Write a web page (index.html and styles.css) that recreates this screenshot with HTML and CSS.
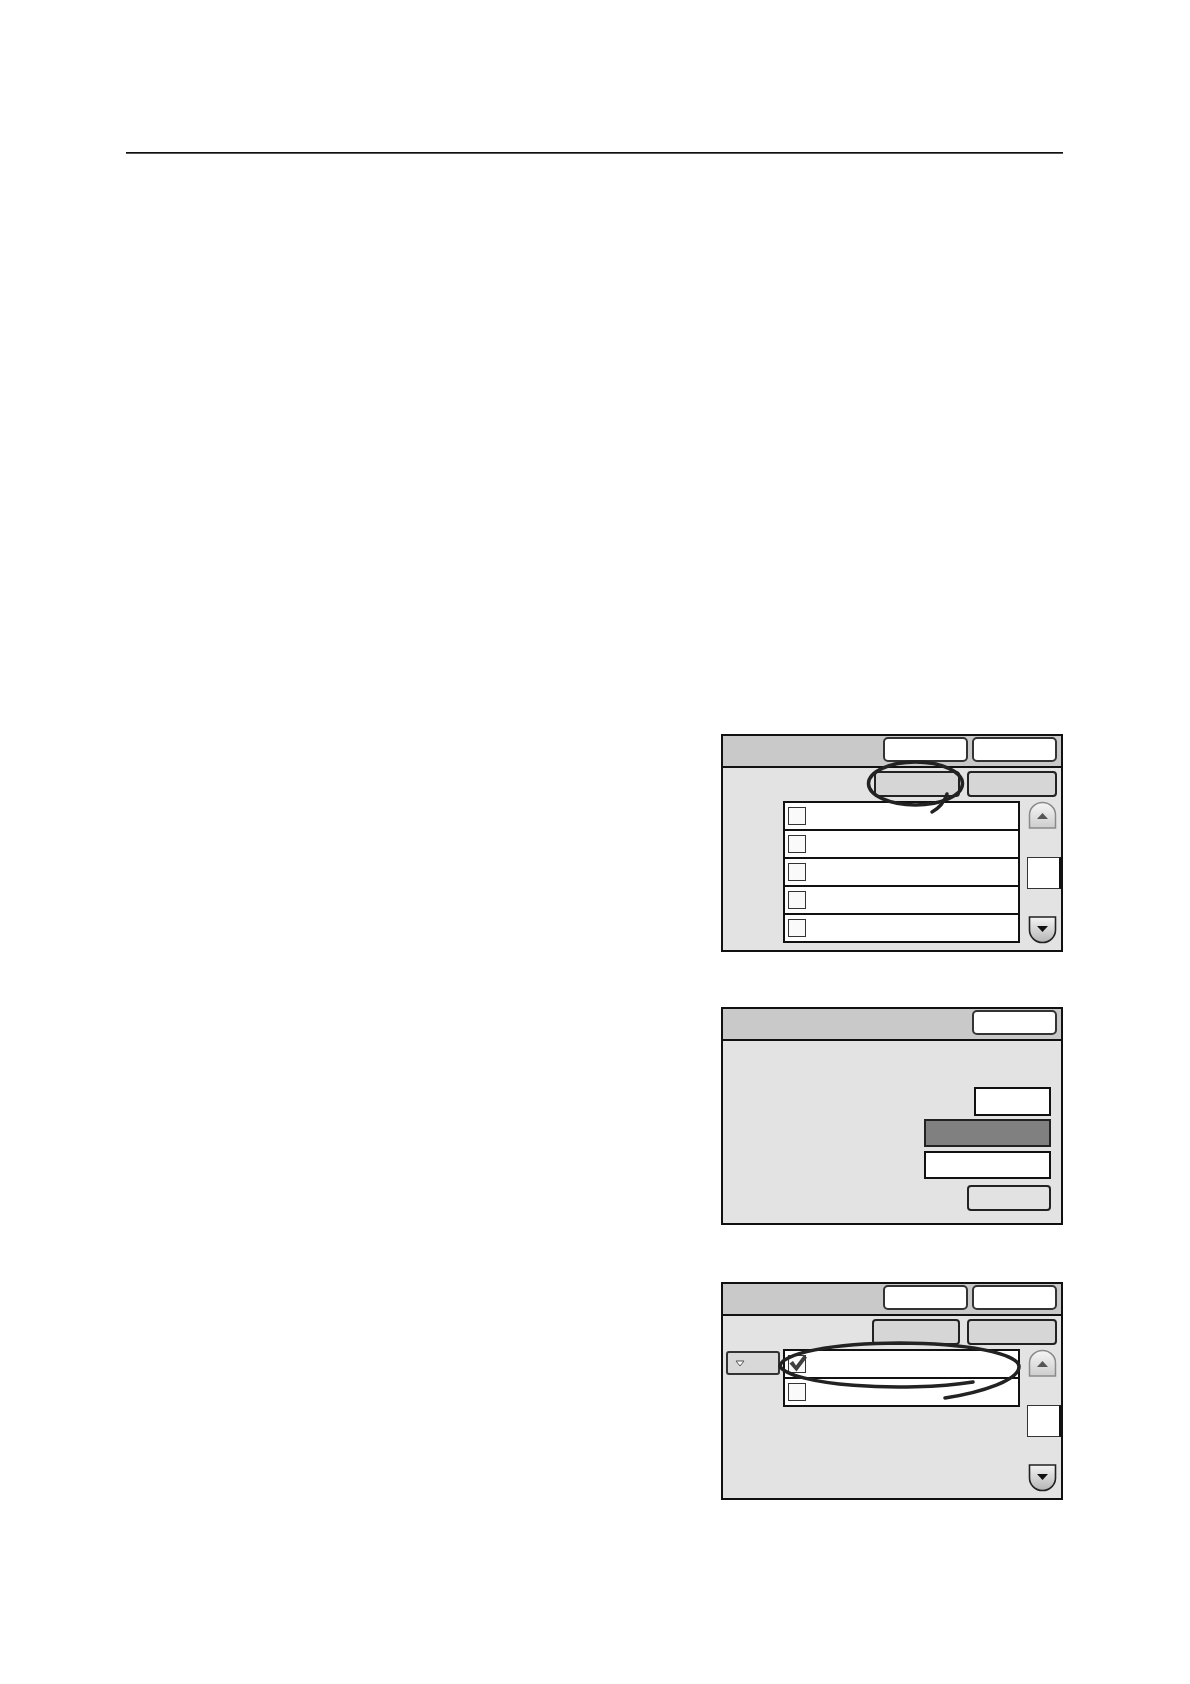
FILE: index.html
```html
<!DOCTYPE html>
<html lang="en">
<head>
<meta charset="utf-8">
<title>Panels</title>
<link rel="stylesheet" href="styles.css">
</head>
<body>
<div class="page">
  <div class="rule"></div>
  <div class="panels">

    <div class="panel">
      <div class="head"><span class="hbtn"></span><span class="hbtn"></span></div>
      <div class="body">
        <div class="tabs"><span class="tab tab-a"></span><span class="tab tab-b"></span></div>
        <div class="main">
          <div class="side"></div>
          <div class="list">
            <div class="row"><span class="cb"></span></div>
            <div class="row"><span class="cb"></span></div>
            <div class="row"><span class="cb"></span></div>
            <div class="row"><span class="cb"></span></div>
            <div class="row"><span class="cb"></span></div>
          </div>
          <div class="scroll">
            <svg class="arrow" width="29" height="28" viewBox="0 0 29 28">
              <defs><linearGradient id="gu1" x1="0" y1="0" x2="0" y2="1"><stop offset="0" stop-color="#f6f6f6"/><stop offset="1" stop-color="#cdcdcd"/></linearGradient></defs>
              <path d="M1.5 27 L1.5 14 A13 12.5 0 0 1 27.5 14 L27.5 27 Z" fill="url(#gu1)" stroke="#8a8a8a" stroke-width="1.5"/>
              <polygon points="9,18 20,18 14.5,12" fill="#555"/>
            </svg>
            <div class="thumb"></div>
            <svg class="arrow" width="29" height="28" viewBox="0 0 29 28">
              <defs><linearGradient id="gd1" x1="0" y1="0" x2="0" y2="1"><stop offset="0" stop-color="#f4f4f4"/><stop offset="1" stop-color="#b4b4b4"/></linearGradient></defs>
              <path d="M1.5 1 L27.5 1 L27.5 14 A13 12.5 0 0 1 1.5 14 Z" fill="url(#gd1)" stroke="#222" stroke-width="1.6"/>
              <polygon points="9,10 20,10 14.5,16" fill="#111"/>
            </svg>
          </div>
        </div>
      </div>
      <svg class="mark" width="342" height="218" viewBox="0 0 342 218">
        <ellipse cx="194.5" cy="49.5" rx="47" ry="21.5" fill="none" stroke="#222" stroke-width="3.5"/>
        <path d="M226 60 Q222 72 211 78" fill="none" stroke="#222" stroke-width="3.5" stroke-linecap="round"/>
      </svg>
    </div>

    <div class="panel">
      <div class="head"><span class="hbtn"></span></div>
      <div class="body body-form">
        <div class="box box-small"></div>
        <div class="box box-dark"></div>
        <div class="box box-white"></div>
        <div class="okbtn"></div>
      </div>
    </div>

    <div class="panel panel-last">
      <div class="head"><span class="hbtn"></span><span class="hbtn"></span></div>
      <div class="body">
        <div class="tabs"><span class="tab tab-c"></span><span class="tab tab-b"></span></div>
        <div class="main">
          <div class="side">
            <div class="dd">
              <svg width="10" height="7" viewBox="0 0 10 7"><polygon points="1,1 9,1 5,6" fill="#fff" stroke="#555" stroke-width="1"/></svg>
            </div>
          </div>
          <div class="list">
            <div class="row"><span class="cb">
              <svg class="check" width="20" height="20" viewBox="0 0 20 20"><path d="M1.5 9.5 L5 7 L8 11.5 L16 1 L19 3.5 L8.5 17.5 Z" fill="#3f3f3f"/></svg>
            </span></div>
            <div class="row"><span class="cb"></span></div>
          </div>
          <div class="scroll">
            <svg class="arrow" width="29" height="28" viewBox="0 0 29 28">
              <defs><linearGradient id="gu3" x1="0" y1="0" x2="0" y2="1"><stop offset="0" stop-color="#f6f6f6"/><stop offset="1" stop-color="#cdcdcd"/></linearGradient></defs>
              <path d="M1.5 27 L1.5 14 A13 12.5 0 0 1 27.5 14 L27.5 27 Z" fill="url(#gu3)" stroke="#8a8a8a" stroke-width="1.5"/>
              <polygon points="9,18 20,18 14.5,12" fill="#555"/>
            </svg>
            <div class="thumb"></div>
            <svg class="arrow" width="29" height="28" viewBox="0 0 29 28">
              <defs><linearGradient id="gd3" x1="0" y1="0" x2="0" y2="1"><stop offset="0" stop-color="#f4f4f4"/><stop offset="1" stop-color="#b4b4b4"/></linearGradient></defs>
              <path d="M1.5 1 L27.5 1 L27.5 14 A13 12.5 0 0 1 1.5 14 Z" fill="url(#gd3)" stroke="#222" stroke-width="1.6"/>
              <polygon points="9,10 20,10 14.5,16" fill="#111"/>
            </svg>
          </div>
        </div>
      </div>
      <svg class="mark" width="342" height="218" viewBox="0 0 342 218">
        <path d="M252 100 A119.5 23.5 0 0 1 59 84.5 A119.5 23.5 0 0 1 298 84.5 C298 98 262 110 224 116" fill="none" stroke="#222" stroke-width="3.5" stroke-linecap="round"/>
      </svg>
    </div>

  </div>
</div>
</body>
</html>
```

FILE: styles.css
```css
html, body {
  margin: 0;
  padding: 0;
  background: #fff;
  font-family: "Liberation Sans", Arial, sans-serif;
}

.page {
  width: 1190px;
  min-height: 1684px;
  padding: 152px 0 0 126px;
  box-sizing: border-box;
}

.rule {
  width: 937px;
  height: 1px;
  background: #111;
  border-bottom: 0.5px solid #555;
}

.panels {
  width: 937px;
  margin-top: 580px;
  display: flex;
  flex-direction: column;
  align-items: flex-end;
  gap: 55px;
}

.panel {
  position: relative;
  width: 342px;
  height: 218px;
  box-sizing: border-box;
  border: 2px solid #111;
  background: #e3e3e3;
  display: flex;
  flex-direction: column;
}

.panel-last {
  margin-top: 2px;
}

.head {
  height: 32px;
  box-sizing: border-box;
  padding: 1px 4px 0 0;
  border-bottom: 2px solid #111;
  background: #c9c9c9;
  display: flex;
  justify-content: flex-end;
  align-items: flex-start;
  gap: 4px;
}

.hbtn {
  width: 85px;
  height: 25px;
  box-sizing: border-box;
  border: 2px solid #333;
  border-radius: 5px;
  background: #fff;
}

.body {
  flex: 1;
  display: flex;
  flex-direction: column;
}

.tabs {
  height: 26px;
  margin-top: 3px;
  padding-right: 4px;
  display: flex;
  justify-content: flex-end;
  gap: 7px;
}

.tab {
  height: 26px;
  box-sizing: border-box;
  border: 2px solid #222;
  border-radius: 4px;
  background: #d6d6d6;
}

.tab-a { width: 86px; }
.tab-b { width: 90px; }
.tab-c { width: 88px; }

.main {
  height: 143px;
  margin-top: 4px;
  display: flex;
}

.side {
  width: 60px;
  padding: 2px 0 0 3px;
  box-sizing: border-box;
}

.list {
  width: 237px;
  align-self: flex-start;
  box-sizing: border-box;
  border: 2px solid #111;
  background: #fff;
}

.row {
  height: 26px;
  padding-left: 3px;
  display: flex;
  align-items: center;
}

.row + .row {
  border-top: 2px solid #111;
}

.cb {
  position: relative;
  width: 18px;
  height: 18px;
  box-sizing: border-box;
  border: 1px solid #333;
  background: #fafafa;
}

.check {
  position: absolute;
  left: -1px;
  top: -2px;
}

.scroll {
  width: 33px;
  margin-left: 8px;
  display: flex;
  flex-direction: column;
  justify-content: space-between;
  align-items: flex-start;
}

.arrow {
  display: block;
}

.thumb {
  width: 34px;
  height: 32px;
  margin-left: -1px;
  box-sizing: border-box;
  background: #fff;
  border: 1px solid #333;
  border-right: 2px solid #111;
}

.dd {
  width: 54px;
  height: 24px;
  box-sizing: border-box;
  border: 2px solid #333;
  border-radius: 3px;
  background: #d8d8d8;
  display: flex;
  align-items: center;
  padding-left: 7px;
}

.dd svg {
  display: block;
}

.mark {
  position: absolute;
  left: -2px;
  top: -2px;
  overflow: visible;
  pointer-events: none;
}

.body-form {
  align-items: flex-end;
  padding: 46px 10px 0 0;
}

.box {
  box-sizing: border-box;
  border: 2px solid #111;
  background: #fff;
}

.box-small {
  width: 77px;
  height: 29px;
}

.box-dark {
  width: 127px;
  height: 28px;
  margin-top: 3px;
  background: #808080;
  border-color: #222;
}

.box-white {
  width: 127px;
  height: 28px;
  margin-top: 4px;
}

.okbtn {
  width: 84px;
  height: 26px;
  margin-top: 6px;
  box-sizing: border-box;
  border: 2px solid #222;
  border-radius: 4px;
  background: #e2e2e2;
}
```
